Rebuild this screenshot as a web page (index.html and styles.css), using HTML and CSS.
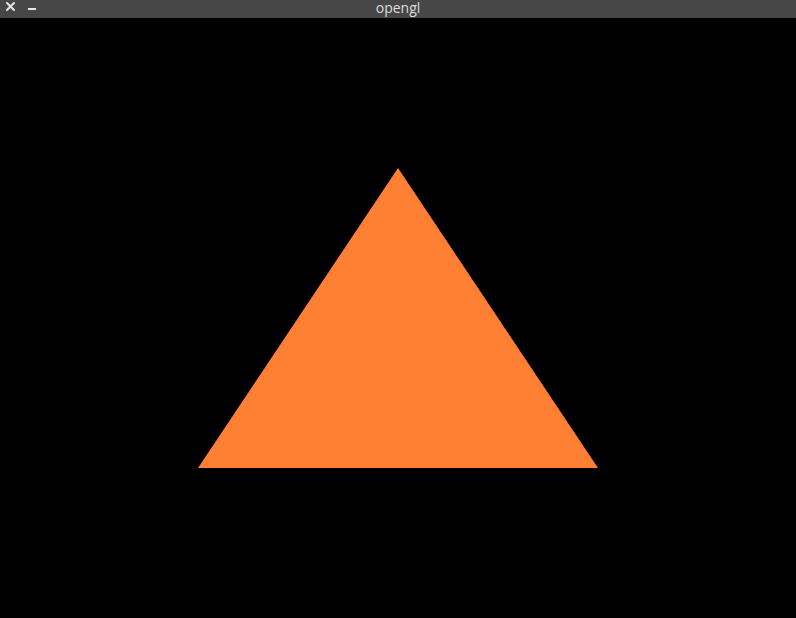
FILE: index.html
```html
<!DOCTYPE html>
<html>
<head>
<meta charset="utf-8">
<link rel="stylesheet" href="styles.css">
</head>
<body>
<div class="window">
  <div class="titlebar">
    <div class="controls">
      <svg class="close" width="11" height="11" viewBox="0 0 11 11">
        <path d="M2 2 L9 9 M9 2 L2 9" stroke="#e6e6e6" stroke-width="2" stroke-linecap="round"/>
      </svg>
      <svg class="min" width="9" height="11" viewBox="0 0 9 11">
        <rect x="0" y="7" width="8" height="2" fill="#e6e6e6"/>
      </svg>
    </div>
    <div class="title">opengl</div>
  </div>
  <div class="canvas">
    <svg class="scene" width="796" height="600" viewBox="0 0 796 600">
      <polygon points="198,450 598,450 398,150" fill="#ff8033"/>
    </svg>
  </div>
</div>
</body>
</html>
```
FILE: styles.css
```css
html, body {
  margin: 0;
  padding: 0;
  background: #000;
  width: 796px;
  height: 618px;
  overflow: hidden;
}
.window {
  display: flex;
  flex-direction: column;
  width: 796px;
  height: 618px;
}
.titlebar {
  position: relative;
  height: 18px;
  background: #474747;
  display: flex;
  align-items: flex-start;
  justify-content: center;
  flex-shrink: 0;
}
.controls {
  position: absolute;
  left: 5px;
  top: 1px;
  display: flex;
  gap: 12px;
  align-items: flex-start;
}
.title {
  font-family: "Open Sans", "DejaVu Sans", sans-serif;
  font-size: 14px;
  color: #dcdcdc;
  line-height: 15px;
  padding-top: 0;
}
.canvas {
  flex: 1;
  background: #000;
}
.scene {
  display: block;
}
```
